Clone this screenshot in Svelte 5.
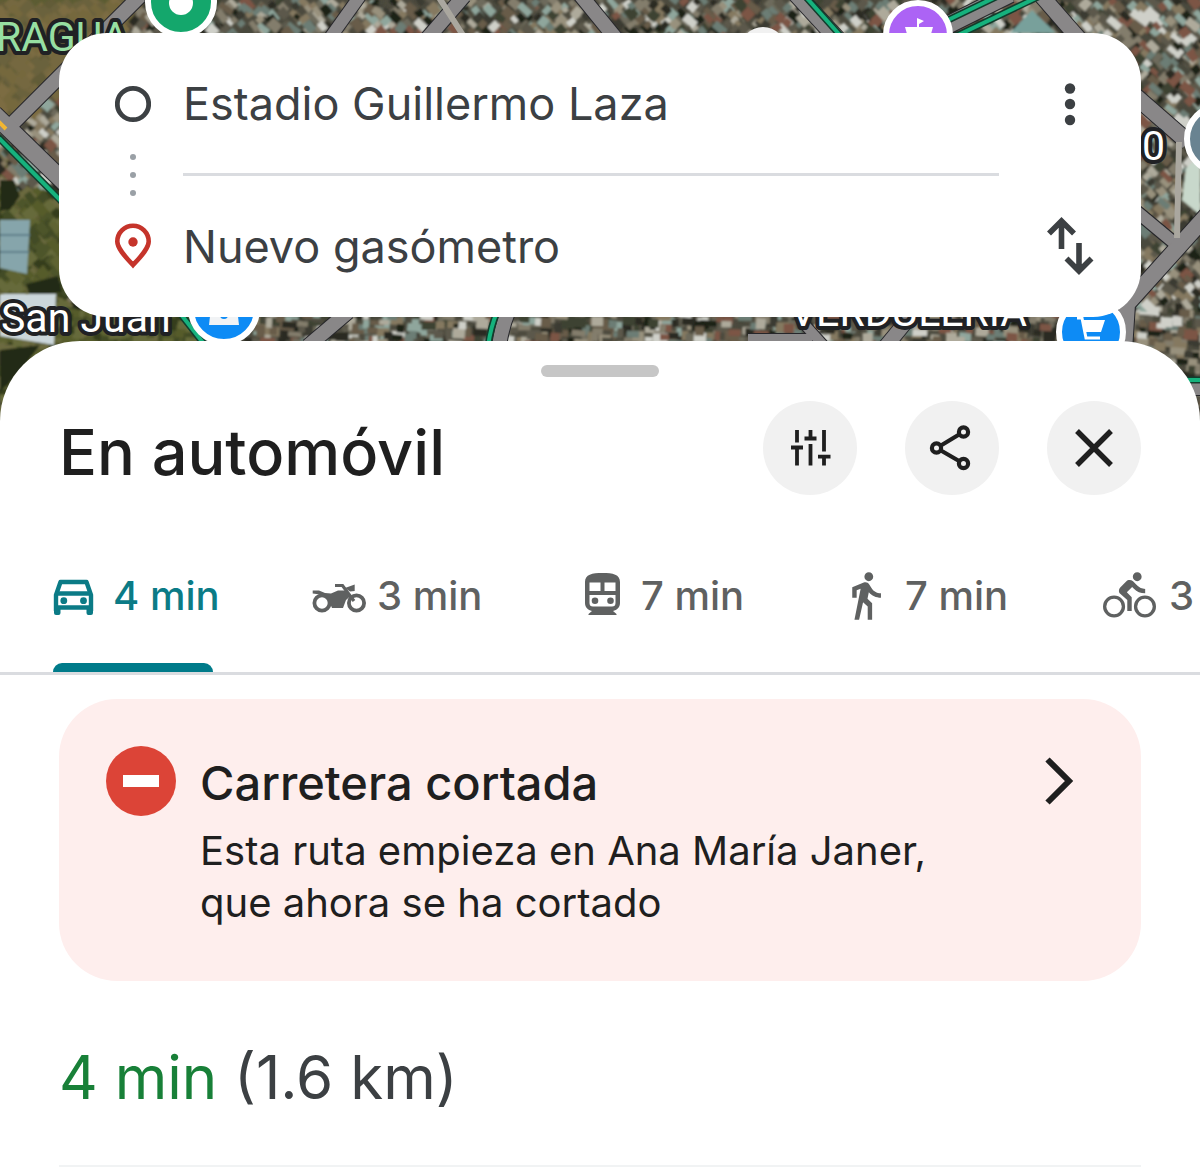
<script>
	let origin = $state('Estadio Guillermo Laza');
	let destination = $state('Nuevo gasómetro');
	let activeMode = $state('car');

	const modes = [
		{ id: 'car', label: 'En automóvil', time: '4 min' },
		{ id: 'motorbike', label: 'En moto', time: '3 min' },
		{ id: 'transit', label: 'En transporte público', time: '7 min' },
		{ id: 'walk', label: 'A pie', time: '7 min' },
		{ id: 'bike', label: 'En bicicleta', time: '3 min' }
	];

	const roofColors = ['#2b2b24', '#3b3a30', '#4a483c', '#5c594b', '#6d6a5b', '#837d6c', '#98917d', '#aeaa9b', '#cfd0c9', '#6c7d74', '#8fa69c', '#7c5545', '#675b48', '#857960', '#1d2019', '#3c4233'];
	const fieldColors = ['#565b2c', '#5e6433', '#4d5429', '#434c25', '#666a3a', '#6c6a3f', '#343d1f'];
	const dryColors = ['#74673f', '#7b6c42', '#6a623d', '#75683e', '#625c38'];

	// Small seeded generator so the ground looks the same on every load
	let seed = 41;
	function rand() {
		seed = (seed * 16807) % 2147483647;
		return seed / 2147483647;
	}

	function isField(x, y) {
		if (x < 62 && y > 180) return true;
		if (x < 190 && y > 300) return true;
		return x < 130 - y && y < 110;
	}

	function tile(x, y, w, h, angle) {
		const c = Math.cos(angle), s = Math.sin(angle);
		const pts = [[0, 0], [w, 0], [w, h], [0, h]].map(
			([a, b]) => `${(x + a * c - b * s).toFixed(1)} ${(y + a * s + b * c).toFixed(1)}`
		);
		return `M${pts.join('L')}Z`;
	}

	function buildGround() {
		const groups = [];
		for (let y = -6; y < 430; y += 7) {
			for (let x = -6; x < 1210; x += 7) {
				// nothing shows under the search card or the sheet
				if (x > 80 && x < 1125 && y > 36 && y < 306) continue;
				if (x > 60 && x < 1140 && y > 345) continue;
				const field = isField(x, y);
				const palette = field ? (y < 110 ? dryColors : fieldColors) : roofColors;
				const color = palette[Math.floor(rand() * palette.length)];
				const angle = y > 300 ? rand() * 0.1 : 0.65 + rand() * 0.3;
				const size = field ? 7 : 5;
				const d = tile(x + rand() * 8, y + rand() * 8, size + rand() * 10, size + rand() * 6, angle);
				// a few layers per colour keep the overlaps mixed
				const key = `${Math.floor(rand() * 3)}${color}`;
				let group = groups.find((g) => g.key === key);
				if (!group) groups.push((group = { key, color, d: '' }));
				group.d += d;
			}
		}
		return groups;
	}

	const ground = buildGround();

	const roads = [
		{ d: 'M6 130L140 -4', w: 14 },
		{ d: 'M-6 114L66 184', w: 17 },
		{ d: 'M360 -4L330 38', w: 12 },
		{ d: 'M464 -4L426 40', w: 14 },
		{ d: 'M578 -8L622 46', w: 14 },
		{ d: 'M796 -6L842 44', w: 16 },
		{ d: 'M930 34L1010 -6', w: 17 },
		{ d: 'M1040 -6L1080 40', w: 15 },
		{ d: 'M1126 88L1188 142', w: 16 },
		{ d: 'M1130 206L1178 246', w: 12 },
		{ d: 'M1208 214L1127 304L1124 350', w: 16 },
		{ d: 'M348 312L308 346', w: 14 },
		{ d: 'M508 312Q502 326 499 346', w: 14 },
		{ d: 'M748 340H812', w: 12 },
		{ d: 'M806 326L824 346', w: 10 },
		{ d: 'M914 312L886 346', w: 14 },
		{ d: 'M1180 388H1206', w: 14 }
	];

	const traffic = [
		'M-4 135L66 206',
		'M805 -4L846 42',
		'M944 22L998 -4',
		'M952 38L1040 -4',
		'M176 308L204 344',
		'M497 312Q491 326 488 346',
		'M1182 380H1206'
	];
</script>

{#snippet modeIcon(id)}
	{#if id === 'car'}
		<svg class="mode-icon" viewBox="1 0 53 53" aria-hidden="true">
			<path d="M10 42V26L14.500 13H40.500L45 26V42" fill="none" stroke="currentColor" stroke-width="4.400" stroke-linejoin="round" />
			<path d="M10 24.500H45M10 38.500H45" stroke="currentColor" stroke-width="4.400" />
			<path d="M8 37H14.500V44Q14.500 46 12.500 46H10Q8 46 8 44ZM40.500 37H47V44Q47 46 45 46H42.500Q40.500 46 40.500 44Z" fill="currentColor" />
			<circle cx="17.800" cy="31.700" r="3.400" fill="currentColor" />
			<circle cx="37.500" cy="31.700" r="3.400" fill="currentColor" />
		</svg>
	{:else if id === 'motorbike'}
		<svg class="mode-icon" viewBox="1 0 53 53" aria-hidden="true">
			<g fill="none" stroke="currentColor">
				<circle cx="12" cy="34" r="7.600" stroke-width="3.800" />
				<circle cx="46.500" cy="34" r="7.600" stroke-width="3.800" />
				<path d="M25 16.500H32.500L44 32" stroke-width="3.200" />
			</g>
			<path d="M2.700 21.500H9L15 24L21 24.500L28 21.500H36L40 27.500L36 31L33 39H22L19 32L14 26L2.700 24.500Z" fill="currentColor" />
			<path d="M35 19L44.700 15.500V22L40 22.500Z" fill="currentColor" />
		</svg>
	{:else if id === 'transit'}
		<svg class="mode-icon" viewBox="1 0 53 53" aria-hidden="true">
			<path d="M28.500 4C18 4 11 5.500 11 13V34C11 38.500 14 41 18 42L14.500 45V46H42.500V45L39 42C43 41 46 38.500 46 34V13C46 5.500 39 4 28.500 4Z" fill="currentColor" />
			<path d="M15.500 13.500H26.500V22H15.500ZM30.500 13.500H41.500V22H30.500ZM15.500 26H41.500V34Q41.500 37.500 38 37.500H19Q15.500 37.500 15.500 34Z" fill="#fff" />
			<circle cx="21" cy="31.700" r="3.300" fill="currentColor" />
			<circle cx="36.500" cy="31.700" r="3.300" fill="currentColor" />
		</svg>
	{:else if id === 'walk'}
		<svg class="mode-icon" viewBox="0 0 24 24" aria-hidden="true">
			<path fill="currentColor" d="M13.500 5.500c1.100 0 2-.9 2-2s-.9-2-2-2-2 .9-2 2 .9 2 2 2zM9.800 8.900L7 23h2.100l1.800-8 2.100 2v6h2v-7.500l-2.100-2 .6-3C14.800 12 16.800 13 19 13v-2c-1.900 0-3.500-1-4.300-2.400l-1-1.600c-.4-.6-1-1-1.700-1-.3 0-.5.100-.8.100L6 8.300V13h2V9.600l1.800-.7" />
		</svg>
	{:else}
		<svg class="mode-icon" viewBox="0 0 24 24" aria-hidden="true">
			<g fill="none" stroke="currentColor" stroke-width="1.500">
				<circle cx="5" cy="17" r="4.250" />
				<circle cx="19" cy="17" r="4.250" />
			</g>
			<path fill="currentColor" d="M15.500 5.500c1.100 0 2-.9 2-2s-.9-2-2-2-2 .9-2 2 .9 2 2 2zM10.800 10.500l2.400-2.400.8.8c1.300 1.300 3 2.100 5.100 2.100V9c-1.500 0-2.700-.6-3.600-1.500l-1.900-1.900c-.5-.4-1-.6-1.600-.6s-1.100.2-1.400.6L7.800 8.400c-.4.400-.6.900-.6 1.400 0 .6.200 1.100.6 1.400L11 14v5h2v-6.200l-2.200-2.300z" />
		</svg>
	{/if}
{/snippet}

<main>
	<section class="map">
		<svg class="map-canvas" viewBox="0 0 1200 421" preserveAspectRatio="xMidYMin slice" aria-hidden="true">
			<defs>
				<filter id="soften"><feGaussianBlur stdDeviation="0.8" /></filter>
			</defs>
			<rect width="1200" height="421" fill="#4c4a3e" />
			<path d="M0 0H130L0 120ZM0 150L62 210V300H190V345H0Z" fill="#5c5c33" />
			<g filter="url(#soften)">
				{#each ground as group (group.key)}
					<path d={group.d} fill={group.color} />
				{/each}
				<path d="M0 180H14L20 196L10 210H0ZM26 284L58 276L62 292L30 296ZM0 350L40 345L20 372L0 392Z" fill="#242c17" />
				<path d="M0 220H30L27 274L0 268Z" fill="#86a5ab" />
				<path d="M0 235H30M0 252H29" stroke="#5d7e8a" stroke-width="2" />
				<path d="M0 294H56L54 345L0 336Z" fill="#cbd6da" />
				<path d="M1186 168L1200 156V215L1182 200Z" fill="#c8d8cb" />
				<path d="M1010 33L1032 10L1056 33Z" fill="#78a09b" />
			</g>
			{#each roads as road}
				<path d={road.d} fill="none" stroke="#26262a" stroke-width={road.w + 2} />
			{/each}
			{#each roads as road}
				<path d={road.d} fill="none" stroke="#898788" stroke-width={road.w} />
			{/each}
			<path d="M438 -4L466 40M1179 142L1177 238" stroke="#aaa79f" stroke-width="6" />
			{#each traffic as d}
				<path {d} fill="none" stroke="#123d2d" stroke-width="7" />
				<path {d} fill="none" stroke="#16b27d" stroke-width="4" />
			{/each}
			<path d="M-2 121L6 129" stroke="#f2b632" stroke-width="4" />

			<g class="place">
				<text x="-4" y="51" class="park">RAGUA</text>
				<text x="1" y="332">San Juan</text>
				<text x="790" y="326">VERDULERÍA</text>
				<text x="1142" y="160">0</text>
			</g>

			<g stroke="#fff" stroke-width="6">
				<circle cx="181" cy="2" r="33" fill="#14a76c" />
				<circle cx="918" cy="35" r="32" fill="#ac63f5" />
				<circle cx="224" cy="309" r="33" fill="#0d8bf5" />
				<circle cx="1091" cy="332" r="32" fill="#0d8bf5" />
				<circle cx="1220" cy="139" r="33" fill="#698391" />
			</g>
			<circle cx="181" cy="3" r="12" fill="#fff" />
			<circle cx="763" cy="50" r="23" fill="#f1f1f1" />
			<path d="M917 33V18L924 21L919 24V27H933L931 34H907L905 27H917Z" fill="#fff" />
			<path d="M211 308H237L239 325H209Z" fill="#f1f3f5" />
			<circle cx="224" cy="315" r="4" fill="#0d8bf5" />
			<path d="M1077 318H1082L1086 338H1100" fill="none" stroke="#fff" stroke-width="3" />
			<path d="M1082 320H1105L1101 332H1085Z" fill="#fff" />
		</svg>

		<form class="search-card" onsubmit={(e) => e.preventDefault()}>
			<svg class="route" viewBox="0 0 36 284" aria-hidden="true">
				<circle cx="18" cy="71" r="15.700" fill="none" stroke="#3c4043" stroke-width="4.800" />
				<g fill="#9aa0a6">
					<circle cx="18" cy="124" r="3" />
					<circle cx="18" cy="142" r="3" />
					<circle cx="18" cy="160" r="3" />
				</g>
				<path d="M18 232C12 225.500 2.300 216 2.300 208.500A15.700 15.700 0 0 1 33.700 208.500C33.700 216 24 225.500 18 232Z" fill="none" stroke="#c5342b" stroke-width="4.600" />
				<circle cx="18" cy="209" r="4.700" fill="#c5342b" />
			</svg>
			<div class="fields">
				<input aria-label="Origen" bind:value={origin} />
				<input aria-label="Destino" bind:value={destination} />
			</div>
			<div class="card-actions">
				<button type="button" aria-label="Más opciones">
					<svg width="60" height="60" viewBox="0 0 60 60" fill="#3c4043" aria-hidden="true">
						<circle cx="30" cy="14.500" r="5.200" />
						<circle cx="30" cy="30" r="5.200" />
						<circle cx="30" cy="46" r="5.200" />
					</svg>
				</button>
				<button type="button" aria-label="Invertir ruta" onclick={() => ([origin, destination] = [destination, origin])}>
					<svg width="60" height="60" viewBox="0 0 60 60" fill="none" stroke="#3c4043" stroke-width="5.600" aria-hidden="true">
						<path d="M21.500 33V5M9 17.500L21.500 5L34 17.500M39 27V55M26.500 42.500L39 55L51.500 42.500" />
					</svg>
				</button>
			</div>
		</form>
	</section>

	<section class="sheet">
		<div class="handle"></div>
		<header>
			<h1>En automóvil</h1>
			<div class="tools">
				<button aria-label="Opciones de ruta">
					<svg viewBox="0 0 94 94" aria-hidden="true">
						<path d="M34 29V41.500M28 46.500H40M34 46.500V64.500M47.500 29V37.500M41.500 37.500H53.500M47.500 43V64.500M61 29V50.500M55 55.700H67.500M61 55.700V64.500" stroke-width="3.800" />
					</svg>
				</button>
				<button aria-label="Compartir">
					<svg viewBox="0 0 94 94" aria-hidden="true">
						<g stroke-width="4.200">
							<circle cx="31.500" cy="47" r="4.600" />
							<circle cx="58.500" cy="31" r="4.600" />
							<circle cx="58.500" cy="62.500" r="4.600" />
							<path d="M35.500 44.700L54.500 33.300M35.500 49.300L54.500 60.300" />
						</g>
					</svg>
				</button>
				<button aria-label="Cerrar">
					<svg viewBox="0 0 94 94" aria-hidden="true">
						<path d="M30 30L64 64M64 30L30 64" stroke-width="5.400" />
					</svg>
				</button>
			</div>
		</header>

		<div class="modes" role="tablist">
			{#each modes as mode (mode.id)}
				<button
					role="tab"
					aria-label="{mode.label}, {mode.time}"
					aria-selected={activeMode === mode.id}
					class:active={activeMode === mode.id}
					onclick={() => (activeMode = mode.id)}
				>
					{@render modeIcon(mode.id)}
					<span>{mode.time}</span>
				</button>
			{/each}
		</div>

		<button class="alert">
			<svg width="70" height="72" viewBox="0 0 70 72" aria-hidden="true">
				<circle cx="35" cy="36" r="35" fill="#dc4437" />
				<rect x="17" y="30" width="36" height="12" fill="#fff" />
			</svg>
			<span class="alert-body">
				<strong>Carretera cortada</strong>
				<span>Esta ruta empieza en Ana María Janer, que ahora se ha cortado</span>
			</span>
			<svg class="chevron" width="32" height="72" viewBox="0 0 32 72" aria-hidden="true">
				<path d="M2.500 14.500L24 36L2.500 57.500" fill="none" stroke="#1f1f1f" stroke-width="6" />
			</svg>
		</button>

		<p class="summary"><span>4 min</span> (1.6 km)</p>
		<hr />
	</section>
</main>

<style>
	:global(body) { background: #fff; }

	main {
		font-family: Inter, "Liberation Sans", sans-serif;
		color: #1f1f1f; overflow: hidden;
	}
	button {
		border: 0; background: none; padding: 0;
		font: inherit; color: inherit; cursor: pointer;
	}
	svg { display: block; flex: none; }

	.map { position: relative; padding: 33px 59px 104px; }
	.map-canvas { position: absolute; inset: 0; width: 100%; height: 100%; }
	.place text {
		font: 400 41px Roboto, sans-serif; fill: #fff;
		stroke: #202124; stroke-width: 8px; stroke-linejoin: round; paint-order: stroke;
	}
	.place .park { fill: #97dfa2; }

	.search-card {
		position: relative; display: flex;
		background: #fff; border-radius: 48px; padding-left: 56px;
	}
	.route { width: 36px; height: 284px; }
	.fields { flex: 1; min-width: 0; margin-left: 32px; }
	.fields input {
		display: block; box-sizing: border-box; width: 100%; height: 142px;
		border: 0; padding: 0; outline: 0; background: none;
		font: inherit; font-size: 45px; color: #3c4043;
	}
	.fields input:first-child { height: 143px; border-bottom: 3px solid #dadce0; }
	.fields input:last-child { height: 141px; }
	.card-actions { width: 142px; }
	.card-actions button { display: grid; place-items: center; width: 142px; height: 142px; }

	.sheet {
		position: relative; margin-top: -80px; padding-top: 24px;
		background: #fff; border-radius: 80px 80px 0 0;
	}
	.handle { width: 118px; height: 12px; margin: 0 auto; border-radius: 6px; background: #c6c6c6; }

	header {
		display: flex; align-items: center; justify-content: space-between;
		padding: 24px 59px 0;
	}
	h1 { margin: 8px 0 0; font-size: 63px; line-height: 80px; font-weight: 500; }
	.tools { display: flex; gap: 48px; }
	.tools button { width: 94px; height: 94px; border-radius: 50%; background: #f1f1f1; }
	.tools svg { width: 94px; height: 94px; fill: none; stroke: #1f1f1f; }

	.modes {
		display: flex; margin-top: 48px; padding-left: 47px;
		border-bottom: 3px solid #dadce0; overflow: hidden;
	}
	.modes button {
		position: relative; flex: 0 0 264px; height: 129px; padding-bottom: 24px;
		display: flex; align-items: center; gap: 13px;
		font-size: 40px; font-weight: 500; color: #5f6161; white-space: nowrap;
	}
	.modes .active { color: #0b7b86; }
	.modes .active::after {
		content: ""; position: absolute; left: 6px; bottom: 0;
		width: 160px; height: 9px; border-radius: 9px 9px 0 0; background: #007b8a;
	}
	.mode-icon { width: 53px; height: 53px; overflow: visible; }

	.alert {
		display: flex; align-items: flex-start; box-sizing: border-box;
		width: calc(100% - 118px); margin: 24px 59px 0; padding: 46px 64px 52px 47px;
		border-radius: 58px; background: #feeeed; text-align: left;
	}
	.alert-body { flex: 1; max-width: 760px; margin-left: 24px; }
	.alert strong { display: block; font-size: 47px; line-height: 76px; font-weight: 500; margin-bottom: 4px; }
	.alert-body span { display: block; font-size: 40px; line-height: 52px; }
	.chevron { margin-left: auto; }

	.summary { margin: 56px 59px 0; font-size: 60px; line-height: 80px; color: #3c4043; }
	.summary span { color: #188038; }
	hr { margin: 48px 59px 0; border: 0; border-top: 2px solid #f1f3f4; }
</style>
